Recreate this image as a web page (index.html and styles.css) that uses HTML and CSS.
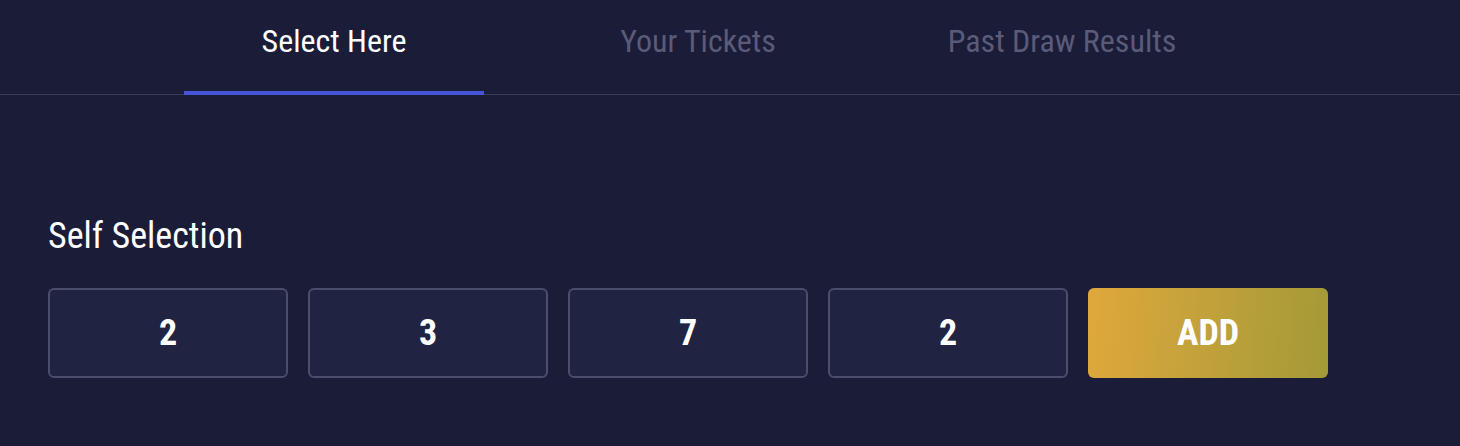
FILE: index.html
```html
<!DOCTYPE html>
<html>
<head>
<meta charset="utf-8">
<link rel="stylesheet" href="styles.css">
</head>
<body>
<div class="page">
  <nav class="tabs">
    <div class="tab active">Select Here</div>
    <div class="tab">Your Tickets</div>
    <div class="tab">Past Draw Results</div>
  </nav>
  <section class="selection">
    <h2 class="title">Self Selection</h2>
    <div class="row">
      <div class="digit">2</div>
      <div class="digit">3</div>
      <div class="digit">7</div>
      <div class="digit">2</div>
      <button class="add">ADD</button>
    </div>
  </section>
</div>
</body>
</html>
```
FILE: styles.css
```css
html, body {
  margin: 0;
  padding: 0;
  background: #1b1c38;
}
body {
  font-family: Roboto, "Liberation Sans", sans-serif;
  font-stretch: condensed;
  color: #ffffff;
  width: 1460px;
  height: 446px;
  overflow: hidden;
}
.tabs {
  display: flex;
  gap: 64px;
  padding-left: 184px;
  border-bottom: 1px solid #3a3b55;
  height: 95px;
  box-sizing: border-box;
}
.tab {
  width: 300px;
  text-align: center;
  font-size: 32px;
  line-height: 38px;
  padding-top: 22px;
  color: #595b78;
  position: relative;
}
.tab.active {
  color: #ffffff;
}
.tab.active::after {
  content: "";
  position: absolute;
  left: 0;
  right: 0;
  bottom: -1px;
  height: 4px;
  background: #4656d8;
}
.selection {
  padding: 0 48px;
}
.title {
  margin: 0;
  padding-top: 120px;
  font-size: 36px;
  font-weight: 400;
  line-height: 42px;
}
.row {
  display: flex;
  gap: 20px;
  margin-top: 31px;
}
.digit, .add {
  width: 240px;
  height: 90px;
  box-sizing: border-box;
  border-radius: 6px;
  display: flex;
  align-items: center;
  justify-content: center;
  font-size: 36px;
  font-weight: 700;
  color: #ffffff;
}
.digit {
  background: #212343;
  border: 2px solid #4b4d6c;
}
.add {
  border: none;
  font-family: inherit;
  font-stretch: condensed;
  background: linear-gradient(95deg, #dfa83c 0%, #a39a38 100%);
}
```
